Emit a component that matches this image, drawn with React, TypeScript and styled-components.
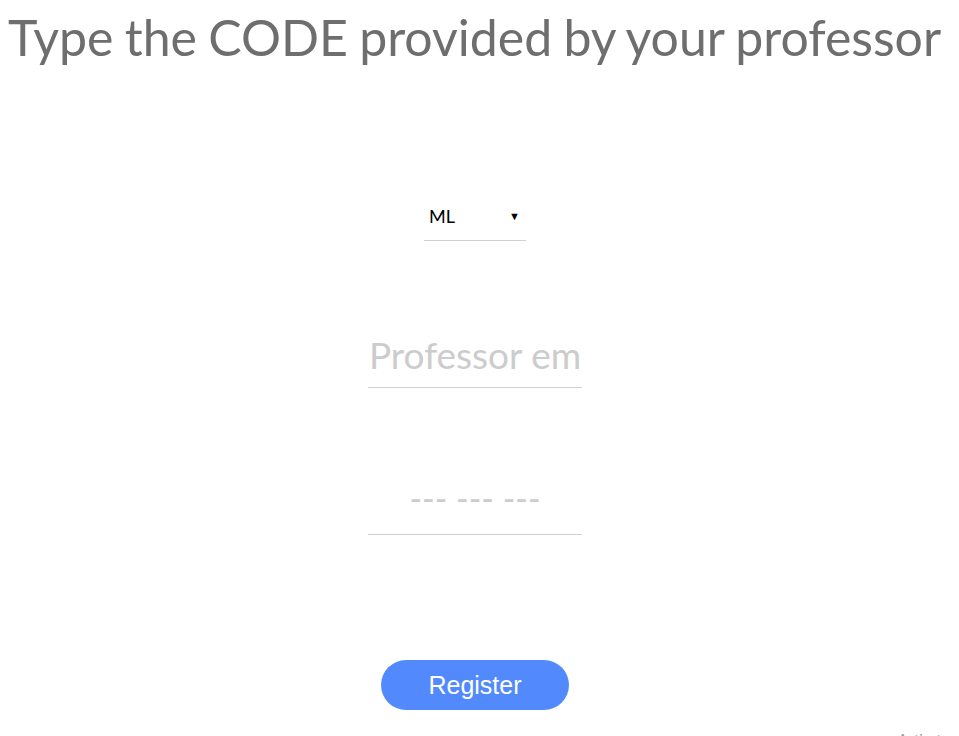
import React from 'react'
import styled, { createGlobalStyle } from 'styled-components'

const GlobalStyle = createGlobalStyle`
  html, body {
    margin: 0;
    padding: 0;
    background: #ffffff;
    overflow: hidden;
  }
  body {
    font-family: Lato, "Open Sans", sans-serif;
  }
`

export default function App() {
  const [course, setCourse] = React.useState('ML')

  return (
    <>
      <GlobalStyle />
      <Page>
        <Title>Type the CODE provided by your professor</Title>
        <Form onSubmit={e => e.preventDefault()}>
          <SelectWrapper>
            <Select value={course} onChange={e => setCourse(e.target.value)}>
              <option value="ML">ML</option>
              <option value="AI">AI</option>
              <option value="DS">DS</option>
            </Select>
            <Arrow>▼</Arrow>
          </SelectWrapper>
          <EmailInput type="email" placeholder="Professor email" />
          <CodeInput type="text" placeholder="--- --- ---" />
          <RegisterButton type="submit">Register</RegisterButton>
        </Form>
        <FooterNote>Activate</FooterNote>
      </Page>
    </>
  )
}

const Page = styled.div`
  width: 959px;
  height: 736px;
  position: relative;
  overflow: hidden;
`

const Title = styled.h1`
  margin: 0;
  padding: 6px 0 0 8px;
  font-family: Lato, sans-serif;
  font-weight: 400;
  font-size: 50px;
  line-height: 62px;
  word-spacing: -1.5px;
  color: #6e6e6e;
  white-space: nowrap;
`

const Form = styled.form`
  display: flex;
  flex-direction: column;
  align-items: center;
  padding-top: 133px;
  margin-left: -9px;
`

const SelectWrapper = styled.div`
  position: relative;
  width: 102px;
  height: 40px;
  border-bottom: 1px solid #d0d0d0;
  box-sizing: border-box;
`

const Select = styled.select`
  appearance: none;
  width: 100%;
  height: 100%;
  border: none;
  background: transparent;
  padding: 0 0 10px 5px;
  font-family: Lato, sans-serif;
  font-size: 18px;
  color: #000;
  outline: none;
`

const Arrow = styled.span`
  position: absolute;
  right: 6px;
  top: 8px;
  font-size: 11px;
  color: #000;
  pointer-events: none;
`

const TextField = styled.input`
  width: 214px;
  height: 56px;
  box-sizing: border-box;
  border: none;
  border-bottom: 1px solid #d0d0d0;
  outline: none;
  background: transparent;
  font-family: Lato, sans-serif;
  color: #555;
  padding: 0;

  &::placeholder {
    color: #cccccc;
  }
`

const EmailInput = styled(TextField)`
  margin-top: 91px;
  font-size: 37px;
  padding: 0 0 10px 1px;
`

const CodeInput = styled(TextField)`
  margin-top: 91px;
  font-size: 34px;
  padding-bottom: 18px;
  text-align: center;
`

const RegisterButton = styled.button`
  margin-top: 125px;
  width: 188px;
  height: 50px;
  border: none;
  border-radius: 25px;
  background: #528afe;
  color: #ffffff;
  font-family: "Liberation Sans", Arial, sans-serif;
  font-size: 25px;
  cursor: pointer;
`

const FooterNote = styled.div`
  position: absolute;
  left: 898px;
  top: 730px;
  font-family: Lato, sans-serif;
  font-size: 14px;
  color: #999;
`
